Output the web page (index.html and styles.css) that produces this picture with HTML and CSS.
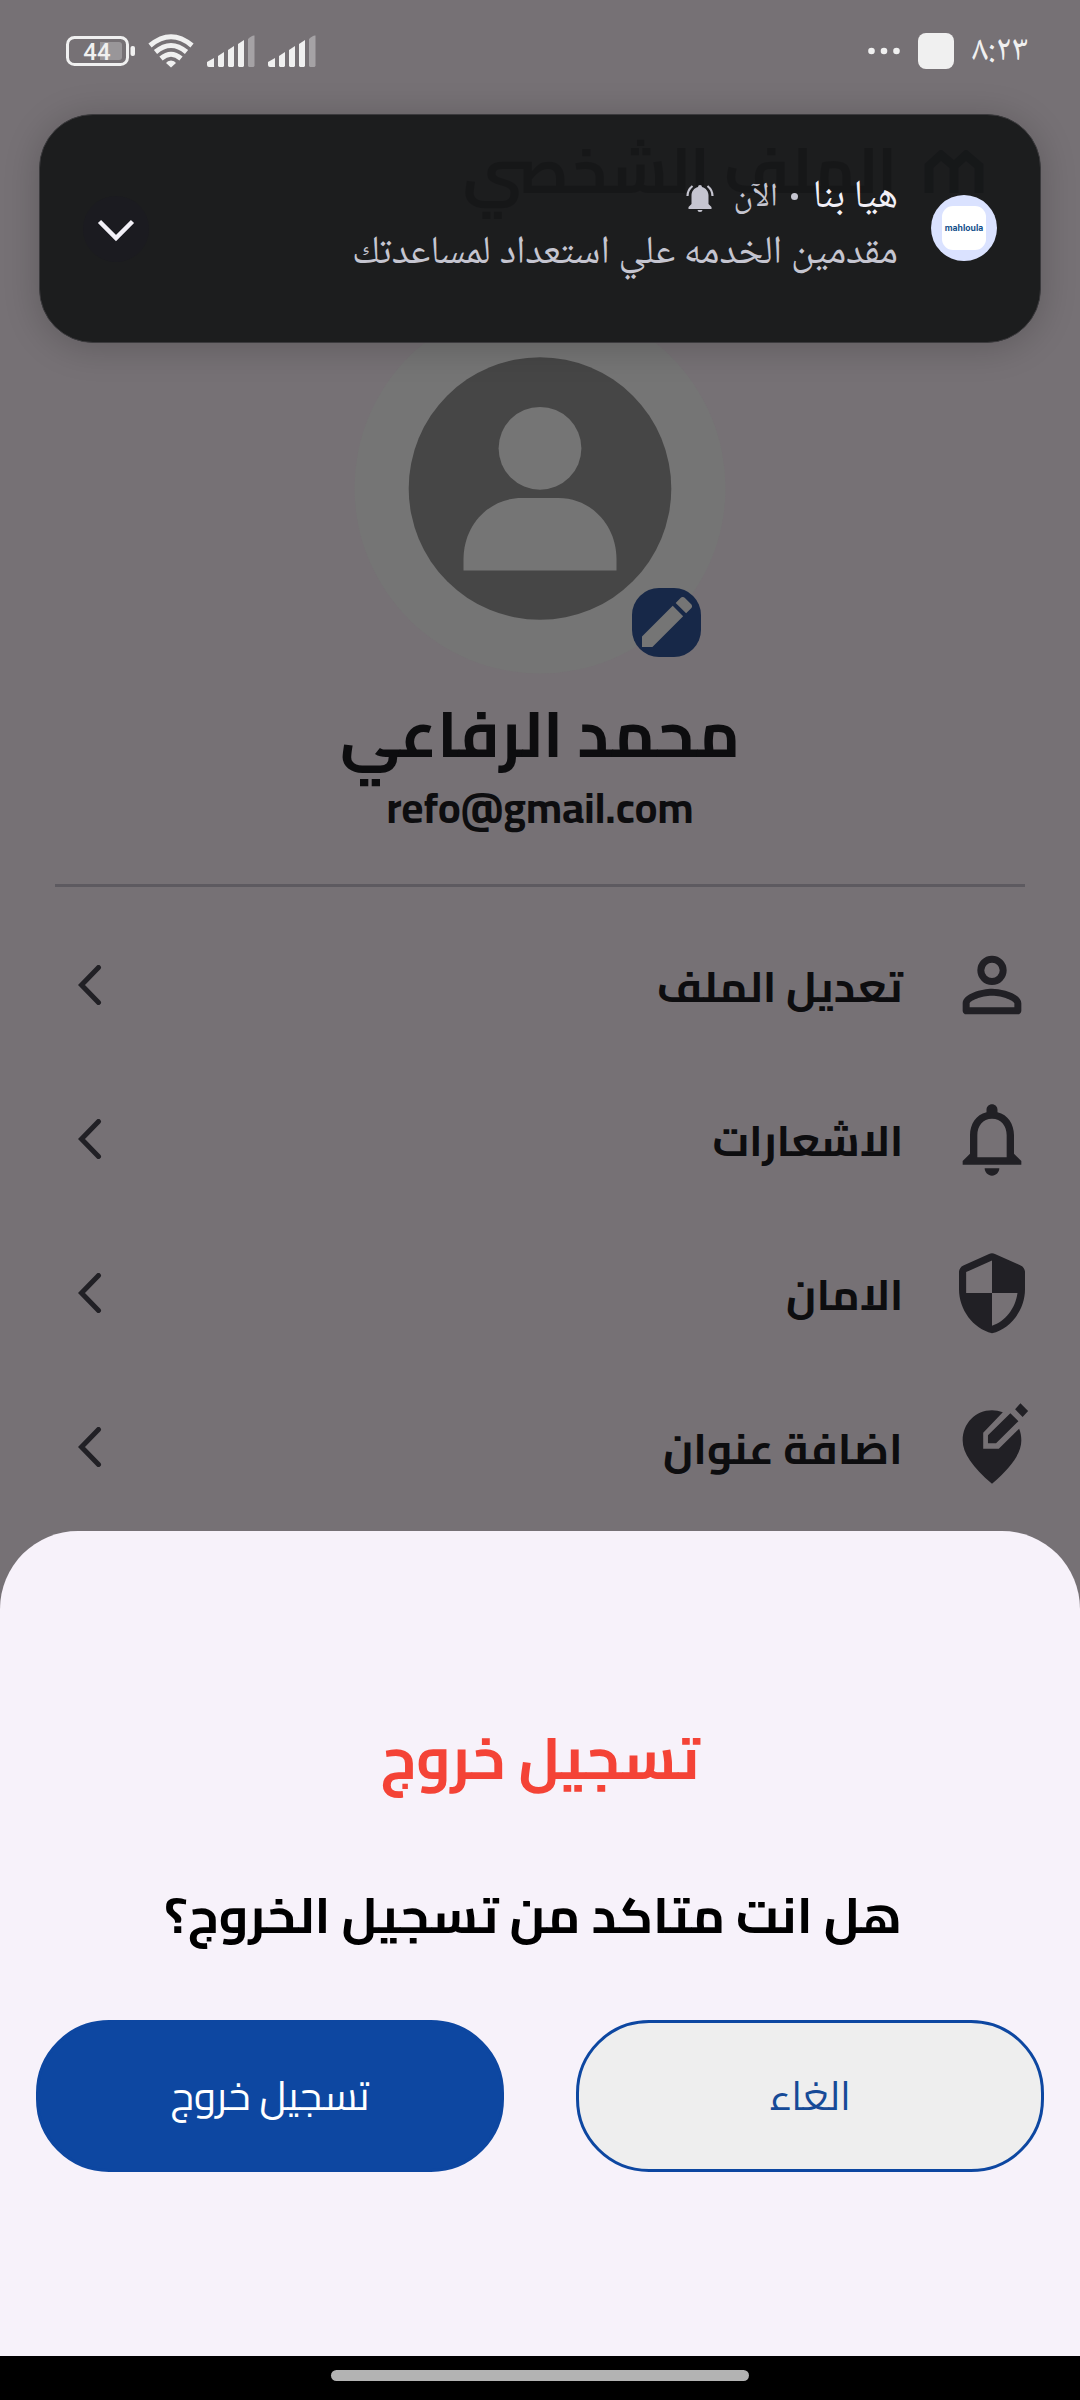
FILE: index.html
```
<!DOCTYPE html>
<html lang="ar" dir="rtl">
<head>
<meta charset="utf-8">
<title>الملف الشخصي</title>
<link rel="stylesheet" href="styles.css">
</head>
<body>
<div class="screen">
  <header class="status">
    <div class="status-side">
      <span class="time">٨:٢٣</span>
      <i class="app-chip"></i>
      <svg class="dots" width="32" height="8" viewBox="0 0 32 8"><circle cx="3.500" cy="4" r="3.300"/><circle cx="16" cy="4" r="3.300"/><circle cx="28.500" cy="4" r="3.300"/></svg>
    </div>
    <div class="status-side status-icons">
      <svg width="70" height="32" viewBox="0 0 70 32"><rect x="2.500" y="2.500" width="60" height="27" rx="7" fill="none" stroke="#f0f0f0" stroke-width="3"/><path d="M35 7h19a3 3 0 0 1 3 3v12a3 3 0 0 1-3 3H35z" fill="#999699"/><rect x="65.500" y="11" width="4.500" height="10" rx="2" fill="#f0f0f0"/><text class="battery-text" x="32" y="25" text-anchor="middle">44</text></svg>
      <svg width="46" height="36" viewBox="0 0 46 36" fill="none" stroke="#f0f0f0" stroke-width="5"><path d="M2 12.500Q23-5 44 12.500"/><path d="M7.500 19Q23 6 38.500 19"/><path d="M13 25.500Q23 17 33 25.500"/><path d="M23 27.500q3.500 0 5 2.500L23 34.500 18 30q1.500-2.500 5-2.500z" fill="#f0f0f0" stroke="none"/></svg>
      <svg width="48" height="32" viewBox="0 0 48 32" fill="#f0f0f0"><path d="M0 27l7-4v9H2q-2 0-2-2zM11 21l6-4v14l-1 1h-4l-1-1zM21 15l6-4v20l-1 1h-4l-1-1zM31 9l6-4v26l-1 1h-4l-1-1z"/><path d="M41 4q4-4 6.500-3.500V31l-1 1H42l-1-1z" fill="#a5a2a5"/></svg>
      <svg width="48" height="32" viewBox="0 0 48 32" fill="#f0f0f0"><path d="M0 27l7-4v9H2q-2 0-2-2zM11 21l6-4v14l-1 1h-4l-1-1zM21 15l6-4v20l-1 1h-4l-1-1zM31 9l6-4v26l-1 1h-4l-1-1z"/><path d="M41 4q4-4 6.500-3.500V31l-1 1H42l-1-1z" fill="#a5a2a5"/></svg>
    </div>
  </header>

  <main class="profile">
    <div class="title-bar">
      <svg width="60" height="44" viewBox="0 0 60 44" fill="none" stroke="#0b1420" stroke-width="9"><path d="M5 43V16L17 5l13 11L42 5l13 11v27M30 16v27"/></svg>
      <h1 class="page-title">الملف الشخصي</h1>
    </div>
    <div class="avatar">
      <svg width="372" height="372" viewBox="0 0 372 372"><circle cx="186" cy="186" r="185.500" fill="#757575"/><circle cx="186" cy="186.500" r="131.300" fill="#464646"/><circle cx="186" cy="146.300" r="41.400" fill="#757575"/><path d="M109.500 268.500v-11c0-35 26-61.500 58-61.500h37c32 0 58 26.500 58 61.500v11z" fill="#757575"/></svg>
      <div class="edit-badge"><svg width="50" height="50" viewBox="3 3 18 18" fill="#757575"><path d="M3 17.250V21h3.750L17.810 9.940l-3.750-3.750L3 17.250zM20.710 7.040c.39-.39.39-1.020 0-1.410l-2.340-2.340c-.39-.39-1.020-.39-1.410 0l-1.830 1.830 3.750 3.750 1.830-1.830z"/></svg></div>
    </div>
    <h2 class="name">محمد الرفاعي</h2>
    <p class="email" dir="ltr">refo@gmail.com</p>
    <hr class="rule">
    <nav class="menu">
      <a class="row"><svg class="row-icon" viewBox="0 0 24 24"><path fill-rule="evenodd" d="M12 4a4 4 0 1 0 0 8 4 4 0 0 0 0-8zm0 1.900a2.100 2.100 0 1 1 0 4.200 2.100 2.100 0 0 1 0-4.200zM12 13c-2.670 0-8 1.340-8 4v2c0 .55.45 1 1 1h14c.55 0 1-.45 1-1v-2c0-2.660-5.330-4-8-4zm6.100 5.100H5.900V17c0-.64 3.130-2.100 6.100-2.100s6.100 1.460 6.100 2.100z"/></svg><span class="label">تعديل الملف</span><svg class="chevron" viewBox="0 0 24 40"><path d="M20.500 2.500L3.500 20l17 17.500"/></svg></a>
      <a class="row"><svg class="row-icon" viewBox="0 0 24 24"><path d="M12 22c1.100 0 2-.9 2-2h-4c0 1.100.9 2 2 2zm6-6v-5c0-3.070-1.630-5.640-4.500-6.320V4c0-.83-.67-1.500-1.500-1.500s-1.500.67-1.500 1.500v.68C7.640 5.360 6 7.920 6 11v5l-2 2v1h16v-1l-2-2zm-2 1H8v-6c0-2.480 1.510-4.500 4-4.500s4 2.020 4 4.500v6z"/></svg><span class="label">الاشعارات</span><svg class="chevron" viewBox="0 0 24 40"><path d="M20.500 2.500L3.500 20l17 17.500"/></svg></a>
      <a class="row"><svg class="row-icon" viewBox="0 0 24 24"><path fill-rule="evenodd" d="M11.190 1.360l-7 3.110C3.470 4.790 3 5.510 3 6.300V11c0 5.550 3.840 10.740 9 12 5.160-1.260 9-6.450 9-12V6.300c0-.79-.47-1.510-1.190-1.830l-7-3.110c-.51-.23-1.110-.23-1.620 0zM12 12h6.950c-.53 4.110-3.280 7.780-6.950 8.920zV12H4.950V6.300L12 3.150z"/></svg><span class="label">الامان</span><svg class="chevron" viewBox="0 0 24 40"><path d="M20.500 2.500L3.500 20l17 17.500"/></svg></a>
      <a class="row"><svg class="row-icon" viewBox="0 0 24 24"><path d="M14.950 2.500A9.200 9.200 0 0 0 12 2C7.500 2 4 5.600 4 10.200c0 3.400 2.670 7.300 8 11.800 5.330-4.500 8-8.400 8-11.800 0-1.150-.2-2.250-.6-3.200l-5.550 5.500H9.600V8.100z"/><path d="M10.900 8.800L17 2.800l2.200 2.150L13.100 11h-2.200zM19.750.1l2.100 2.100-1.500 1.600-2.050-2.100z"/></svg><span class="label">اضافة عنوان</span><svg class="chevron" viewBox="0 0 24 40"><path d="M20.500 2.500L3.500 20l17 17.500"/></svg></a>
    </nav>
  </main>

  <aside class="notification">
    <div class="notif-avatar"><div class="notif-logo" dir="ltr">mahloula</div></div>
    <div class="notif-text">
      <div class="notif-head"><span class="notif-title">هيا بنا</span><i class="sep"></i><span class="notif-time">الآن</span><svg class="ringing" width="28" height="28" viewBox="0 0 28 28"><path d="M14 1a2 2 0 0 1 2 2c4 1 6.500 4.500 6.500 8.500V20l3 3v2h-23v-2l3-3v-8.500C5.500 7.500 8 4 12 3a2 2 0 0 1 2-2zM11.500 26h5a2.500 2 0 0 1-5 0z"/><path d="M1.500 12q0-6 5-10M26.500 12q0-6-5-10" fill="none" stroke="#c5c5d0" stroke-width="2.200"/></svg></div>
      <div class="notif-body">مقدمين الخدمه علي استعداد لمساعدتك</div>
    </div>
    <div class="expand"><svg width="38" height="24" viewBox="0 0 38 24"><path d="M2.500 2.500L19 19 35.500 2.500" fill="none" stroke="#f2f0f7" stroke-width="4.500"/></svg></div>
  </aside>

  <section class="sheet">
    <h2 class="sheet-title">تسجيل خروج</h2>
    <p class="question">هل انت متاكد من تسجيل الخروج؟</p>
    <div class="actions">
      <button class="btn cancel"><span>الغاء</span></button>
      <button class="btn logout"><span>تسجيل خروج</span></button>
    </div>
  </section>
  <footer class="gesture-bar"><i class="handle"></i></footer>
</div>
</body>
</html>
```
FILE: styles.css
```
* { box-sizing: border-box; }
body { margin: 0; }
h1, h2, p { margin: 0; white-space: nowrap; }
svg { display: block; flex: none; }

.screen {
  position: relative;
  width: 1080px;
  height: 2400px;
  overflow: hidden;
  background: #767175;
  font-family: Cairo, "DejaVu Sans", sans-serif;
  display: flex;
  flex-direction: column;
}

.status { height: 102px; padding: 0 52px 0 65px; display: flex; justify-content: space-between; align-items: center; }
.status-side { display: flex; align-items: center; gap: 18px; }
.status-icons { direction: ltr; gap: 13px; }
.time { font: 36.5px/50px "Noto Naskh Arabic UI", "Noto Naskh Arabic", serif; color: #f0f0f0; }
.app-chip { width: 36px; height: 36px; border-radius: 8px; background: #f0f0f0; }
.dots { fill: #f0f0f0; }
.battery-text { font: 500 24px Roboto, sans-serif; fill: #f0f0f0; }

.profile { display: flex; flex-direction: column; align-items: center; }
.title-bar { width: 100%; height: 200px; padding: 48px 96px 0; display: flex; gap: 27px; }
.page-title { margin-top: -10px; font-size: 63px; line-height: 60px; color: #0d0d0f; }
.avatar { position: relative; width: 372px; height: 372px; }
.edit-badge {
  position: absolute;
  left: 278px;
  top: 286px;
  width: 69px;
  height: 69px;
  padding: 9px;
  border-radius: 27px;
  background: #172848;
}
.name { margin-top: 25px; font-size: 64.3px; line-height: 70px; color: #0d0d0f; }
.email { margin-top: 13px; font-size: 42.6px; font-weight: 700; line-height: 50px; color: #0d0d0f; }
.rule { width: 970px; height: 3px; margin: 52px 0 0; border: 0; background: #5d5a60; }
.menu { width: 100%; padding: 21px 44px 0 78px; }
.row { height: 154px; display: flex; align-items: center; color: #0d0d0f; }
.row-icon { width: 88px; height: 88px; fill: #212025; }
.label {
  margin: 4px 45px 0 0;
  font-size: 42px;
  font-weight: 700;
  line-height: 60px;
  transform: scaleX(1.035);
  transform-origin: right;
}
.chevron { width: 24px; height: 40px; margin-right: auto; fill: none; stroke: #212025; stroke-width: 5; stroke-linecap: round; }

.notification {
  position: absolute;
  top: 114px;
  left: 39px;
  width: 1002px;
  height: 229px;
  padding: 0 43px;
  border: 1px solid #3b3a3d;
  border-radius: 54px;
  background: rgba(23, 24, 25, .95);
  box-shadow: 0 4px 36px rgba(0, 0, 0, .2);
  display: flex;
  align-items: center;
  font-family: "Noto Naskh Arabic UI", "Noto Naskh Arabic", serif;
}
.notif-avatar { width: 66px; height: 66px; margin-bottom: 1px; border-radius: 50%; background: #dae2ff; display: grid; place-items: center; }
.notif-logo { width: 44px; height: 44px; border-radius: 11px; background: #fff; color: #14508c; font: 700 8.6px/44px Inter, sans-serif; text-align: center; }
.notif-text { margin-right: 33px; padding-bottom: 7px; white-space: nowrap; }
.notif-head { display: flex; align-items: center; height: 56px; }
.notif-title { font-size: 39.4px; line-height: 56px; color: #f2f0f7; }
.sep { width: 7px; height: 7px; border-radius: 50%; background: #c5c5d0; margin: -2px 15px 0 13px; }
.notif-time { margin-top: 1px; font-size: 33px; line-height: 56px; color: #c5c5d0; }
.ringing { margin: 2px 20px 0 0; fill: #c5c5d0; }
.notif-body { font-size: 39.4px; line-height: 56px; color: #c5c5d0; }
.expand { width: 66px; height: 66px; margin-right: auto; padding-top: 5px; border-radius: 50%; background: #1b1b20; display: grid; place-items: center; }

.sheet {
  position: absolute;
  top: 1531px;
  left: 0;
  right: 0;
  height: 825px;
  border-radius: 78px 78px 0 0;
  background: #f7f2fa;
  display: flex;
  flex-direction: column;
  align-items: center;
}
.sheet-title { margin-top: 187px; font-size: 58.7px; line-height: 80px; color: #f44336; }
.question { margin-top: 82px; padding-right: 13px; font-size: 49px; font-weight: 700; line-height: 70px; color: #000; transform: scaleX(1.037); }
.actions { width: 100%; margin-top: 70px; padding: 0 36px; display: flex; justify-content: space-between; }
.btn { width: 468px; height: 152px; padding: 0 0 2px; border: 3px solid #0d47a1; border-radius: 73px; display: grid; place-items: center; font: 40.4px Cairo, "DejaVu Sans", sans-serif; }
.cancel { background: #eee; color: #164a97; }
.logout { background: #0d47a1; color: #fff; }

.gesture-bar { position: absolute; left: 0; right: 0; bottom: 0; height: 44px; background: #000; display: flex; justify-content: center; padding-top: 14px; }
.handle { width: 418px; height: 11px; border-radius: 6px; background: #b3b3b3; }
```
